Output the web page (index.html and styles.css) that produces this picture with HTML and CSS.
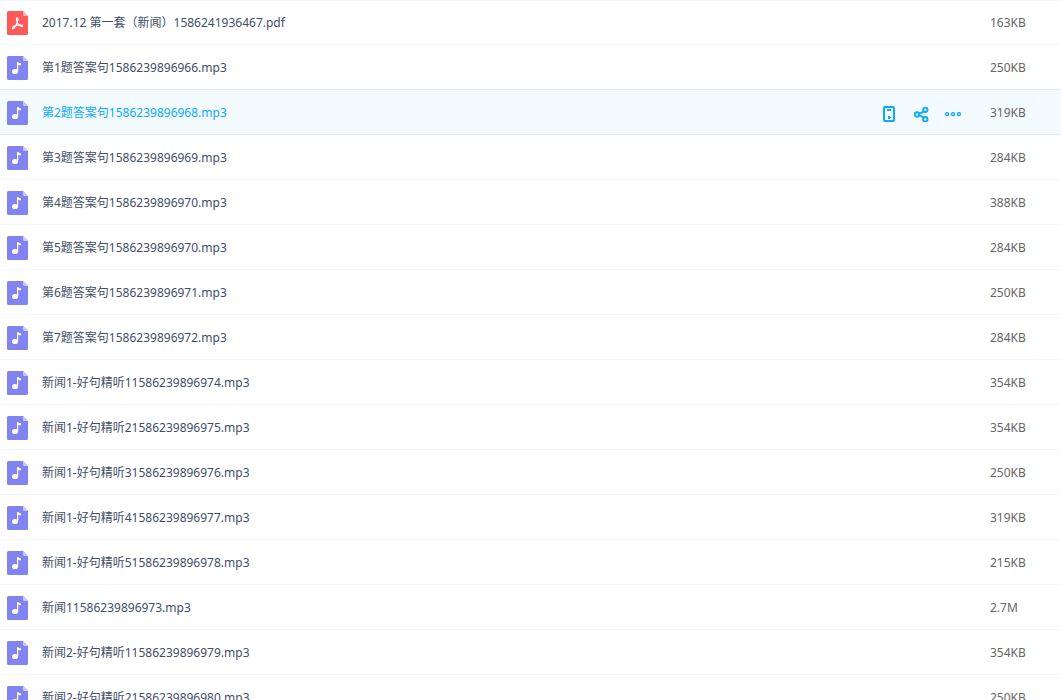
FILE: index.html
```
<!DOCTYPE html>
<html lang="zh-CN">
<head>
<meta charset="utf-8">
<meta name="viewport" content="width=device-width, initial-scale=1">
<title>文件列表</title>
<link rel="stylesheet" href="styles.css">
</head>
<body>
<svg class="sprite" aria-hidden="true">
  <symbol id="icon-audio" viewBox="0 0 21 24">
    <path fill="#8183f1" d="M1.500 0H16l5 5v17.500a1.500 1.500 0 0 1-1.500 1.500h-18A1.500 1.500 0 0 1 0 22.500V1.500A1.500 1.500 0 0 1 1.500 0z"/>
    <path fill="#c9caf9" d="M16 0l5 5h-3.500A1.500 1.500 0 0 1 16 3.500z"/>
    <ellipse cx="8" cy="15.500" rx="3" ry="2.600" fill="#fff"/>
    <path fill="#fff" d="M10 6h1.300c.2 1 1 1.300 2.700 1.300v2c-1.200.1-2.200-.1-2.800-.6V15.500H10z"/>
  </symbol>
  <symbol id="icon-pdf" viewBox="0 0 21 24">
    <path fill="#ff5a5a" d="M1.500 0H16l5 5v17.500a1.500 1.500 0 0 1-1.500 1.500h-18A1.500 1.500 0 0 1 0 22.500V1.500A1.500 1.500 0 0 1 1.500 0z"/>
    <path fill="#ffb9b9" d="M16 0l5 5h-3.500A1.500 1.500 0 0 1 16 3.500z"/>
    <path fill="none" stroke="#fff" stroke-width="1.200" stroke-linecap="round" stroke-linejoin="round" d="M9.700 7c1.200-.4 1.500.8 1.100 2.500C10 13 8.300 16 6.600 17.600c-.9.700-1.700-.2-1-1.100 1.300-1.500 5.200-2.700 8.600-2.500 2.100.2 2 1.700.5 1.400-2.100-.5-4.300-3-4.900-5.500-.4-1.300-.6-2.500-.1-2.900z"/>
  </symbol>
  <symbol id="icon-phone" viewBox="0 0 16 16">
    <rect x="3" y="1" width="10" height="14" rx="1" fill="none" stroke="currentColor" stroke-width="2"/>
    <path fill="currentColor" d="M6 3h4v2H6zM7 10h2v1h1v1H9v1H7z"/>
  </symbol>
  <symbol id="icon-share" viewBox="0 0 16 16">
    <g fill="none" stroke="currentColor" stroke-width="1.900">
      <circle cx="4" cy="8.500" r="2.200"/>
      <circle cx="12.300" cy="3.800" r="2.200"/>
      <circle cx="12.300" cy="13.200" r="2.200"/>
      <path d="M6 7.500c2.500-.3 4-1 5-2.300M6 9.200c2 .5 3.500 1.300 4.500 2.700"/>
    </g>
  </symbol>
  <symbol id="icon-more" viewBox="0 0 16 16">
    <g fill="none" stroke="currentColor" stroke-width="1.300">
      <rect x="0.700" y="6.700" width="2.800" height="2.800" rx="1"/>
      <rect x="6.600" y="6.700" width="2.800" height="2.800" rx="1"/>
      <rect x="12.500" y="6.700" width="2.800" height="2.800" rx="1"/>
    </g>
  </symbol>
</svg>
<table class="files" aria-label="文件列表">
  <tbody>
    <tr class="file"><td class="kind"><svg class="kind-icon"><use href="#icon-pdf"/></svg></td><td class="name"><a class="link" href="#">2017.12 第一套（新闻）1586241936467.pdf</a></td><td class="actions"></td><td class="size">163KB</td></tr>
    <tr class="file before-active"><td class="kind"><svg class="kind-icon"><use href="#icon-audio"/></svg></td><td class="name"><a class="link" href="#">第1题答案句1586239896966.mp3</a></td><td class="actions"></td><td class="size">250KB</td></tr>
    <tr class="file active"><td class="kind"><svg class="kind-icon"><use href="#icon-audio"/></svg></td><td class="name"><a class="link" href="#">第2题答案句1586239896968.mp3</a></td><td class="actions"><div class="toolbar"><button class="action" type="button" aria-label="发送到手机"><svg class="action-icon"><use href="#icon-phone"/></svg></button><button class="action" type="button" aria-label="分享"><svg class="action-icon"><use href="#icon-share"/></svg></button><button class="action" type="button" aria-label="更多"><svg class="action-icon"><use href="#icon-more"/></svg></button></div></td><td class="size">319KB</td></tr>
    <tr class="file"><td class="kind"><svg class="kind-icon"><use href="#icon-audio"/></svg></td><td class="name"><a class="link" href="#">第3题答案句1586239896969.mp3</a></td><td class="actions"></td><td class="size">284KB</td></tr>
    <tr class="file"><td class="kind"><svg class="kind-icon"><use href="#icon-audio"/></svg></td><td class="name"><a class="link" href="#">第4题答案句1586239896970.mp3</a></td><td class="actions"></td><td class="size">388KB</td></tr>
    <tr class="file"><td class="kind"><svg class="kind-icon"><use href="#icon-audio"/></svg></td><td class="name"><a class="link" href="#">第5题答案句1586239896970.mp3</a></td><td class="actions"></td><td class="size">284KB</td></tr>
    <tr class="file"><td class="kind"><svg class="kind-icon"><use href="#icon-audio"/></svg></td><td class="name"><a class="link" href="#">第6题答案句1586239896971.mp3</a></td><td class="actions"></td><td class="size">250KB</td></tr>
    <tr class="file"><td class="kind"><svg class="kind-icon"><use href="#icon-audio"/></svg></td><td class="name"><a class="link" href="#">第7题答案句1586239896972.mp3</a></td><td class="actions"></td><td class="size">284KB</td></tr>
    <tr class="file"><td class="kind"><svg class="kind-icon"><use href="#icon-audio"/></svg></td><td class="name"><a class="link" href="#">新闻1-好句精听11586239896974.mp3</a></td><td class="actions"></td><td class="size">354KB</td></tr>
    <tr class="file"><td class="kind"><svg class="kind-icon"><use href="#icon-audio"/></svg></td><td class="name"><a class="link" href="#">新闻1-好句精听21586239896975.mp3</a></td><td class="actions"></td><td class="size">354KB</td></tr>
    <tr class="file"><td class="kind"><svg class="kind-icon"><use href="#icon-audio"/></svg></td><td class="name"><a class="link" href="#">新闻1-好句精听31586239896976.mp3</a></td><td class="actions"></td><td class="size">250KB</td></tr>
    <tr class="file"><td class="kind"><svg class="kind-icon"><use href="#icon-audio"/></svg></td><td class="name"><a class="link" href="#">新闻1-好句精听41586239896977.mp3</a></td><td class="actions"></td><td class="size">319KB</td></tr>
    <tr class="file"><td class="kind"><svg class="kind-icon"><use href="#icon-audio"/></svg></td><td class="name"><a class="link" href="#">新闻1-好句精听51586239896978.mp3</a></td><td class="actions"></td><td class="size">215KB</td></tr>
    <tr class="file"><td class="kind"><svg class="kind-icon"><use href="#icon-audio"/></svg></td><td class="name"><a class="link" href="#">新闻11586239896973.mp3</a></td><td class="actions"></td><td class="size">2.7M</td></tr>
    <tr class="file"><td class="kind"><svg class="kind-icon"><use href="#icon-audio"/></svg></td><td class="name"><a class="link" href="#">新闻2-好句精听11586239896979.mp3</a></td><td class="actions"></td><td class="size">354KB</td></tr>
    <tr class="file"><td class="kind"><svg class="kind-icon"><use href="#icon-audio"/></svg></td><td class="name"><a class="link" href="#">新闻2-好句精听21586239896980.mp3</a></td><td class="actions"></td><td class="size">250KB</td></tr>
  </tbody>
</table>
</body>
</html>
```

FILE: styles.css
```
body {
  margin: 0;
  background: #fff;
  color: #424e67;
  font: 12px/18px "Noto Sans", "Noto Sans CJK SC", sans-serif;
}

.sprite {
  display: none;
}

.files {
  width: 100%;
  border-collapse: separate;
  border-spacing: 0;
  box-shadow: inset 0 1px #f0f5ff;
}

.file td {
  height: 42px;
  padding: 2px 0 0;
  border-bottom: 1px solid #f2f6fd;
  vertical-align: middle;
}

.file .kind {
  width: 35px;
  padding-left: 7px;
}

.kind-icon {
  display: block;
  width: 21px;
  height: 24px;
}

.link {
  color: inherit;
  text-decoration: none;
  white-space: nowrap;
}

.file .size {
  width: 71px;
  color: #666;
}

.before-active td,
.active td {
  border-bottom-color: #d9e8fa;
}

.active td {
  background: #f4fbff;
}

.active .link,
.action {
  color: #09aaff;
}

.toolbar {
  display: flex;
  justify-content: flex-end;
  gap: 16px;
  padding: 2px 29px 0 0;
}

.action {
  width: 16px;
  height: 16px;
  padding: 0;
  border: 0;
  background: none;
  cursor: pointer;
}

.action-icon {
  display: block;
  width: 16px;
  height: 16px;
}
```
